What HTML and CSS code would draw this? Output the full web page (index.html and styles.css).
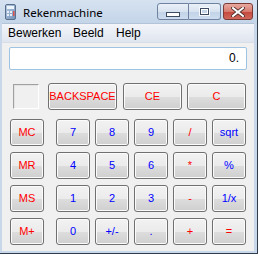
FILE: index.html
```html
<!DOCTYPE html>
<html>
<head>
<meta charset="utf-8">
<link rel="stylesheet" href="styles.css">
</head>
<body>
<div class="window">
  <div class="titlebar">
    <svg class="appicon" width="11" height="16" viewBox="0 0 11 16">
      <defs>
        <linearGradient id="ig" x1="0" y1="0" x2="1" y2="1">
          <stop offset="0" stop-color="#b9cde6"/>
          <stop offset="1" stop-color="#6f8fb8"/>
        </linearGradient>
      </defs>
      <rect x="0.5" y="0.5" width="10" height="15" rx="1.5" fill="url(#ig)" stroke="#5a6f8c"/>
      <rect x="2" y="2" width="7" height="3" fill="#eef4fb"/>
      <rect x="2" y="7" width="2" height="2" fill="#e8eef6"/>
      <rect x="5" y="7" width="2" height="2" fill="#e8eef6"/>
      <rect x="2" y="10" width="2" height="2" fill="#e8eef6"/>
      <rect x="5" y="10" width="2" height="2" fill="#e8eef6"/>
      <rect x="8" y="7" width="1.5" height="5" fill="#d9534f"/>
    </svg>
    <span class="title">Rekenmachine</span>
    <div class="wbtns">
      <div class="wbtn min"><span class="minbar"></span></div>
      <div class="wbtn max"><span class="maxbox"></span></div>
      <div class="wbtn close">
        <svg width="14" height="10" viewBox="0 0 14 10">
          <path d="M2 1 L12 9 M12 1 L2 9" stroke="#4a2a2a" stroke-width="3.6" stroke-linecap="square"/>
          <path d="M2 1 L12 9 M12 1 L2 9" stroke="#ffffff" stroke-width="2" stroke-linecap="square"/>
        </svg>
      </div>
    </div>
  </div>
  <div class="menubar">
    <span class="mi mi1">Bewerken</span>
    <span class="mi mi2">Beeld</span>
    <span class="mi mi3">Help</span>
  </div>
  <div class="client">
    <div class="display">0.</div>
    <div class="toprow">
      <div class="membox"></div>
      <button class="btn red bs">BACKSPACE</button>
      <button class="btn red ce">CE</button>
      <button class="btn red c">C</button>
    </div>
    <div class="main">
      <div class="memcol">
        <button class="btn red">MC</button>
        <button class="btn red">MR</button>
        <button class="btn red">MS</button>
        <button class="btn red">M+</button>
      </div>
      <div class="grid">
        <button class="btn blue">7</button>
        <button class="btn blue">8</button>
        <button class="btn blue">9</button>
        <button class="btn red">/</button>
        <button class="btn blue">sqrt</button>
        <button class="btn blue">4</button>
        <button class="btn blue">5</button>
        <button class="btn blue">6</button>
        <button class="btn red">*</button>
        <button class="btn blue">%</button>
        <button class="btn blue">1</button>
        <button class="btn blue">2</button>
        <button class="btn blue">3</button>
        <button class="btn red">-</button>
        <button class="btn blue">1/x</button>
        <button class="btn blue">0</button>
        <button class="btn blue">+/-</button>
        <button class="btn blue">.</button>
        <button class="btn red">+</button>
        <button class="btn red">=</button>
      </div>
    </div>
  </div>
</div>
</body>
</html>
```
FILE: styles.css
```css
html, body {
  margin: 0;
  padding: 0;
  background: #ffffff;
}
.window {
  width: 258px;
  height: 254px;
  box-sizing: border-box;
  background: #c8d8ea;
  border-right: 1px solid #2f3c4c;
  border-bottom: 1px solid #2f3c4c;
  display: flex;
  flex-direction: column;
  overflow: hidden;
}
.titlebar {
  height: 23px;
  flex: none;
  display: flex;
  align-items: center;
  background: linear-gradient(#d6e2f0, #c4d5e9);
  position: relative;
}
.appicon {
  margin-left: 5px;
  margin-top: 1px;
}
.title {
  margin-left: 7px;
  font-family: "Noto Sans", sans-serif;
  font-size: 11.5px;
  color: #000;
  margin-top: 1px;
}
.wbtns {
  margin-left: auto;
  margin-right: 4px;
  display: flex;
  align-self: flex-start;
  margin-top: 3px;
}
.wbtn {
  height: 17px;
  box-sizing: border-box;
  border: 1px solid #6f83a0;
  display: flex;
  align-items: center;
  justify-content: center;
}
.min {
  width: 32px;
  border-radius: 3px 0 0 3px;
  background: linear-gradient(#eaf0f8 0%, #d8e3f0 50%, #c2d3e8 51%, #cddcee 100%);
}
.max {
  width: 32px;
  border-left: none;
  border-radius: 0 3px 3px 0;
  background: linear-gradient(#eaf0f8 0%, #d8e3f0 50%, #c2d3e8 51%, #cddcee 100%);
}
.close {
  width: 30px;
  margin-left: 2px;
  border-radius: 3px;
  border-color: #7a3a36;
  background: linear-gradient(#e8a99f 0%, #d87b6f 50%, #c4463a 51%, #d0685c 100%);
}
.minbar {
  width: 12px;
  height: 3px;
  background: #fff;
  border: 1px solid #3d4c60;
  margin-top: 6px;
}
.maxbox {
  width: 7px;
  height: 5px;
  border: 1px solid #3d4c60;
  box-shadow: inset 0 0 0 1px #fff;
  background: #c7d6e8;
  outline: 1px solid #f4f8fc;
}
.menubar {
  height: 18px;
  flex: none;
  margin: 0 3px 0 2px;
  background: linear-gradient(#f3f5fa, #dfe5ef);
  border-top: 1px solid #b4c4d8;
  position: relative;
  font-family: "Liberation Sans", Arial, sans-serif;
  font-size: 12px;
  color: #000;
  display: flex;
  align-items: center;
}
.mi { line-height: 16px; }
.mi1 { margin-left: 6px; width: 65px; }
.mi2 { width: 43px; }
.mi3 { }
.client {
  flex: 1;
  margin: 0 3px 2px 2px;
  background: #f0f0f0;
  border-top: 1px solid #d8dee8;
  padding-top: 4px;
  font-family: "Liberation Sans", Arial, sans-serif;
}
.display {
  margin-left: 7px;
  width: 238px;
  height: 23px;
  box-sizing: border-box;
  background: #fff;
  border: 1px solid #9fc3e2;
  border-radius: 2px;
  text-align: right;
  padding-right: 7px;
  font-family: "Liberation Sans", Arial, sans-serif;
  font-size: 12px;
  line-height: 20px;
  color: #000;
}
.toprow {
  display: flex;
  margin-top: 13px;
  height: 27px;
  align-items: flex-start;
}
.membox {
  margin-left: 11px;
  margin-top: 1px;
  width: 26px;
  height: 25px;
  box-sizing: border-box;
  border-top: 1px solid #a0a0a0;
  border-left: 1px solid #a0a0a0;
  border-right: 1px solid #ffffff;
  border-bottom: 1px solid #ffffff;
  box-shadow: inset 1px 1px 0 #e3e3e3;
}
.btn {
  height: 27px;
  box-sizing: border-box;
  border: 1px solid #707070;
  border-radius: 3px;
  padding: 0;
  margin: 0;
  background: linear-gradient(#f2f2f2 0%, #ebebeb 50%, #dddddd 51%, #cfcfcf 100%);
  box-shadow: inset 0 0 0 1px #fbfbfb;
  font-family: "Liberation Sans", Arial, sans-serif;
  font-size: 11px;
  line-height: 25px;
  text-align: center;
}
.red { color: #ff0000; }
.blue { color: #0000ff; }
.bs { margin-left: 9px; width: 69px; }
.ce { margin-left: 6px; width: 59px; }
.c { margin-left: 5px; width: 59px; }
.main {
  display: flex;
  margin-top: 9px;
}
.memcol {
  margin-left: 8px;
  width: 34px;
  display: flex;
  flex-direction: column;
  gap: 6px;
}
.memcol .btn { width: 34px; }
.grid {
  margin-left: 12px;
  display: grid;
  grid-template-columns: repeat(5, 34px);
  column-gap: 5px;
  row-gap: 6px;
}
```
